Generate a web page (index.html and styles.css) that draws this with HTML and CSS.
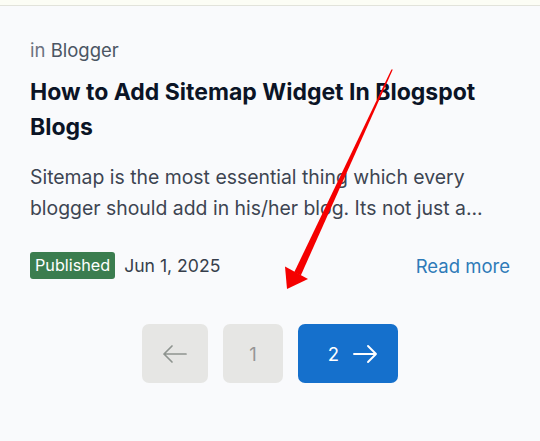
FILE: index.html
```html
<!DOCTYPE html>
<html lang="en">
<head>
<meta charset="utf-8">
<link rel="stylesheet" href="styles.css">
</head>
<body>
<div class="topbar"></div>
<main class="page">
  <article class="post">
    <div class="label"><span class="in">in</span> <span class="cat">Blogger</span></div>
    <h2 class="title">How to Add Sitemap Widget In Blogspot Blogs</h2>
    <p class="snippet">Sitemap is the most essential thing which every blogger should add in his/her blog. Its not just a...</p>
    <div class="meta">
      <div class="meta-left">
        <span class="badge">Published</span>
        <span class="date">Jun 1, 2025</span>
      </div>
      <a class="more" href="#">Read more</a>
    </div>
  </article>
  <nav class="pager">
    <span class="pbtn prev">
      <svg width="26" height="26" viewBox="0 0 26 26" fill="none" stroke="currentColor" stroke-width="1.7" stroke-linecap="round" stroke-linejoin="round"><path d="M24 13H2M10 5l-8 8 8 8"/></svg>
    </span>
    <span class="pbtn num">1</span>
    <span class="pbtn next"><span>2</span>
      <svg width="26" height="26" viewBox="0 0 26 26" fill="none" stroke="currentColor" stroke-width="1.9" stroke-linecap="round" stroke-linejoin="round"><path d="M2 13h22M16 5l8 8-8 8"/></svg>
    </span>
  </nav>
</main>
<svg class="annot" width="540" height="441" viewBox="0 0 540 441">
  <polygon fill="#f50000" points="392.8,69.6 391.4,69.4 294.2,272.3 300.8,275.4"/>
  <polygon fill="#f50000" points="287,289 308,279 285,266.5"/>
</svg>
</body>
</html>
```
FILE: styles.css
```css
html, body {
  margin: 0;
  padding: 0;
}
body {
  background: #f9fafc;
  font-family: Inter, "Noto Sans", sans-serif;
  width: 540px;
  height: 441px;
  overflow: hidden;
  position: relative;
}
.topbar {
  height: 5px;
  background: #fcfdf5;
  border-bottom: 1px solid #e2e3db;
}
.page {
  padding: 0 30px;
}
.post {
  padding-top: 31px;
}
.label {
  font-size: 18.5px;
  line-height: 26px;
  color: #4b5563;
}
.label .in {
  color: #6b7280;
}
.title {
  margin: 12px 0 0;
  font-size: 23px;
  line-height: 35px;
  font-weight: 700;
  color: #0b1426;
}
.snippet {
  margin: 17px 0 0;
  font-size: 19.4px;
  line-height: 31px;
  color: #3d4552;
}
.meta {
  margin-top: 28px;
  display: flex;
  align-items: center;
  justify-content: space-between;
}
.meta-left {
  display: flex;
  align-items: center;
  gap: 9px;
}
.badge {
  background: #3b7d4f;
  color: #fff;
  font-size: 16.2px;
  line-height: 27px;
  padding: 0 5px;
  border-radius: 3px;
}
.date {
  font-size: 17.6px;
  color: #363e4b;
}
.more {
  font-size: 18.5px;
  color: #2e7ab8;
  text-decoration: none;
}
.pager {
  margin-top: 45px;
  display: flex;
  justify-content: center;
  gap: 15px;
}
.pbtn {
  height: 59px;
  border-radius: 7px;
  display: flex;
  align-items: center;
  justify-content: center;
}
.prev {
  width: 66px;
  background: #e6e6e4;
  color: #8e948f;
}
.num {
  width: 60px;
  background: #e6e6e4;
  color: #969696;
  font-size: 18.5px;
}
.next {
  width: 100px;
  background: #1570cc;
  color: #fff;
  gap: 13px;
  font-size: 18.5px;
  padding-left: 10px;
  box-sizing: border-box;
}
.annot {
  position: absolute;
  left: 0;
  top: 0;
  pointer-events: none;
}
```
